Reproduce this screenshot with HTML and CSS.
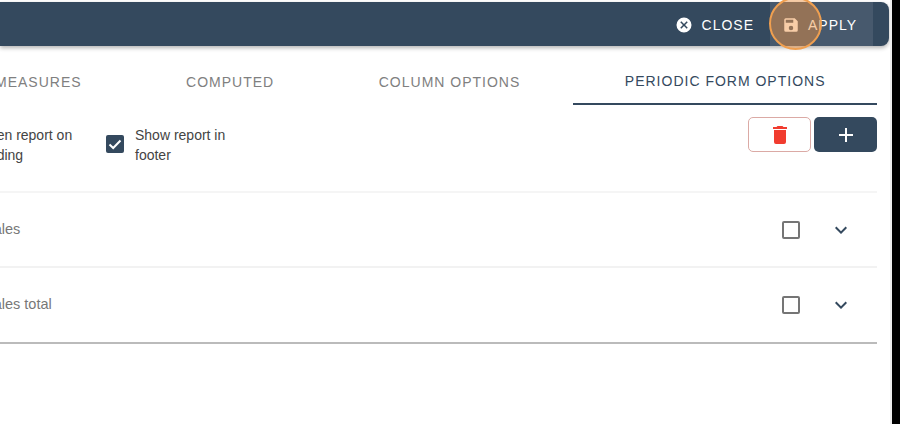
FILE: index.html
```html
<!DOCTYPE html>
<html lang="en">
<head>
    <meta charset="UTF-8">
    <title>Periodic form options</title>
    <link rel="stylesheet" href="styles.css">
</head>
<body>
    <div class="page">
        <div class="toolbar">
            <button class="tool-button">
                <svg class="tool-icon" viewBox="0 0 24 24"><path fill="#fff" d="M12 2a10 10 0 1 0 0 20 10 10 0 0 0 0-20zm5 13.6L15.6 17 12 13.4 8.400 17 7 15.600 10.600 12 7 8.400 8.400 7 12 10.600 15.600 7 17 8.400 13.400 12z"/></svg>
                CLOSE
            </button>
            <button class="tool-button apply">
                <svg class="tool-icon" viewBox="0 0 24 24"><path fill="#fff" d="M17 3H5a2 2 0 0 0-2 2v14a2 2 0 0 0 2 2h14a2 2 0 0 0 2-2V7l-4-4zm-5 16a3 3 0 1 1 0-6 3 3 0 0 1 0 6zm3-10H5V5h10v4z"/></svg>
                APPLY
            </button>
            <span class="click-ring"></span>
        </div>

        <div class="tabs">
            <div class="tab">MEASURES</div>
            <div class="tab">COMPUTED</div>
            <div class="tab">COLUMN OPTIONS</div>
            <div class="tab active">PERIODIC FORM OPTIONS</div>
        </div>

        <div class="options">
            <div class="option first">
                <span class="checkbox checked"><svg viewBox="0 0 18 18"><path d="M3.500 9.500l3.700 3.500 7.300-7.500" fill="none" stroke="#fff" stroke-width="2"/></svg></span>
                <span class="option-label">Open report on loading</span>
            </div>
            <div class="option">
                <span class="checkbox checked"><svg viewBox="0 0 18 18"><path d="M3.500 9.500l3.700 3.500 7.300-7.500" fill="none" stroke="#fff" stroke-width="2"/></svg></span>
                <span class="option-label">Show report in footer</span>
            </div>
            <div class="actions">
                <button class="button delete">
                    <svg viewBox="0 0 24 24" width="24" height="24"><path fill="#f13c2f" d="M6 19a2 2 0 0 0 2 2h8a2 2 0 0 0 2-2V7H6v12zM19 4h-3.500l-1-1h-5l-1 1H5v2h14V4z"/></svg>
                </button>
                <button class="button add">
                    <svg viewBox="0 0 24 24" width="24" height="24"><path fill="#fff" d="M19 13h-6v6h-2v-6H5v-2h6V5h2v6h6v2z"/></svg>
                </button>
            </div>
        </div>

        <div class="list">
            <div class="row">
                <span class="row-title">Sales</span>
                <span class="checkbox"></span>
                <svg class="chevron" viewBox="0 0 24 24"><path fill="#34495e" d="M7.410 8.590L12 13.170l4.590-4.580L18 10l-6 6-6-6z"/></svg>
            </div>
            <div class="row">
                <span class="row-title">Sales total</span>
                <span class="checkbox"></span>
                <svg class="chevron" viewBox="0 0 24 24"><path fill="#34495e" d="M7.410 8.590L12 13.170l4.590-4.580L18 10l-6 6-6-6z"/></svg>
            </div>
        </div>
    </div>
</body>
</html>
```
FILE: styles.css
```css
* {
    box-sizing: border-box;
}

html, body {
    height: 100%;
}

body {
    margin: 0;
    background-color: #000;
    font-family: "Liberation Sans", Arial, sans-serif;
    overflow: hidden;
}

.page {
    width: 892px;
    height: 424px;
    padding-top: 2px;
    background-color: #fff;
    border-right: 2px solid #eee;
    overflow: hidden;
}

.toolbar {
    position: relative;
    display: flex;
    justify-content: flex-end;
    align-items: stretch;
    width: 889px;
    height: 44px;
    padding-right: 16px;
    background-color: #34495e;
    border-radius: 0 8px 8px 0;
    box-shadow: 0 2px 4px rgba(0,0,0,0.3);
}

.tool-button {
    display: flex;
    align-items: center;
    gap: 9px;
    padding: 2px 16px 0;
    border: none;
    background: none;
    color: #fff;
    font-family: inherit;
    font-size: 14px;
    letter-spacing: 1px;
}

.tool-button.apply {
    width: 103px;
    padding: 2px 0 0 12px;
    gap: 8px;
    background-color: #47596d;
}

.tool-icon {
    width: 18px;
    height: 18px;
}

.click-ring {
    position: absolute;
    left: 769px;
    top: -5px;
    width: 53px;
    height: 53px;
    border: 2px solid #ef9f50;
    border-radius: 50%;
    background-color: rgba(240,145,60,0.45);
}

.tabs {
    display: flex;
    justify-content: flex-end;
    gap: 1.5px;
    width: 877px;
    height: 59px;
}

.tab {
    display: flex;
    align-items: center;
    height: 59px;
    padding: 12px 51.5px 0;
    color: #808080;
    font-size: 14px;
    letter-spacing: 1px;
    white-space: nowrap;
}

.tab.active {
    color: #34495e;
    border-bottom: 2px solid #34495e;
}

.options {
    display: flex;
    align-items: flex-start;
    width: 928px;
    height: 88px;
    margin-left: -51px;
    padding-top: 12px;
    border-bottom: 2px solid #f5f5f5;
}

.option {
    display: flex;
    align-items: center;
    width: 166px;
    gap: 11px;
    margin-top: 8px;
    color: #444;
    font-size: 14px;
    line-height: 20px;
}

.option.first {
    width: 157px;
}

.option-label {
    width: 110px;
}

.checkbox {
    display: block;
    flex: none;
    width: 18px;
    height: 18px;
    border: 2px solid #757575;
    border-radius: 2px;
}

.checkbox.checked {
    margin-bottom: 3px;
    border: none;
    background-color: #34495e;
}

.checkbox svg {
    display: block;
}

.actions {
    display: flex;
    gap: 3px;
    margin-left: auto;
}

.button {
    display: flex;
    align-items: center;
    justify-content: center;
    width: 63px;
    height: 35px;
    border-radius: 5px;
    padding: 0;
}

.button.delete {
    background-color: #fff;
    border: 1px solid #dbaaa5;
}

.button.add {
    background-color: #34495e;
    border: none;
}

.list {
    width: 877px;
    border-bottom: 2px solid #bbb;
}

.row {
    display: flex;
    align-items: center;
    height: 75px;
    padding-right: 24px;
    border-bottom: 2px solid #f2f2f2;
}

.row:last-child {
    height: 74px;
    border-bottom: none;
}

.row-title {
    flex: 1;
    margin-left: -16px;
    padding-bottom: 1px;
    color: #777;
    font-size: 14.5px;
}

.row:last-child .row-title {
    padding-bottom: 3px;
}

.chevron {
    width: 24px;
    height: 24px;
    margin-left: 29px;
}
```
